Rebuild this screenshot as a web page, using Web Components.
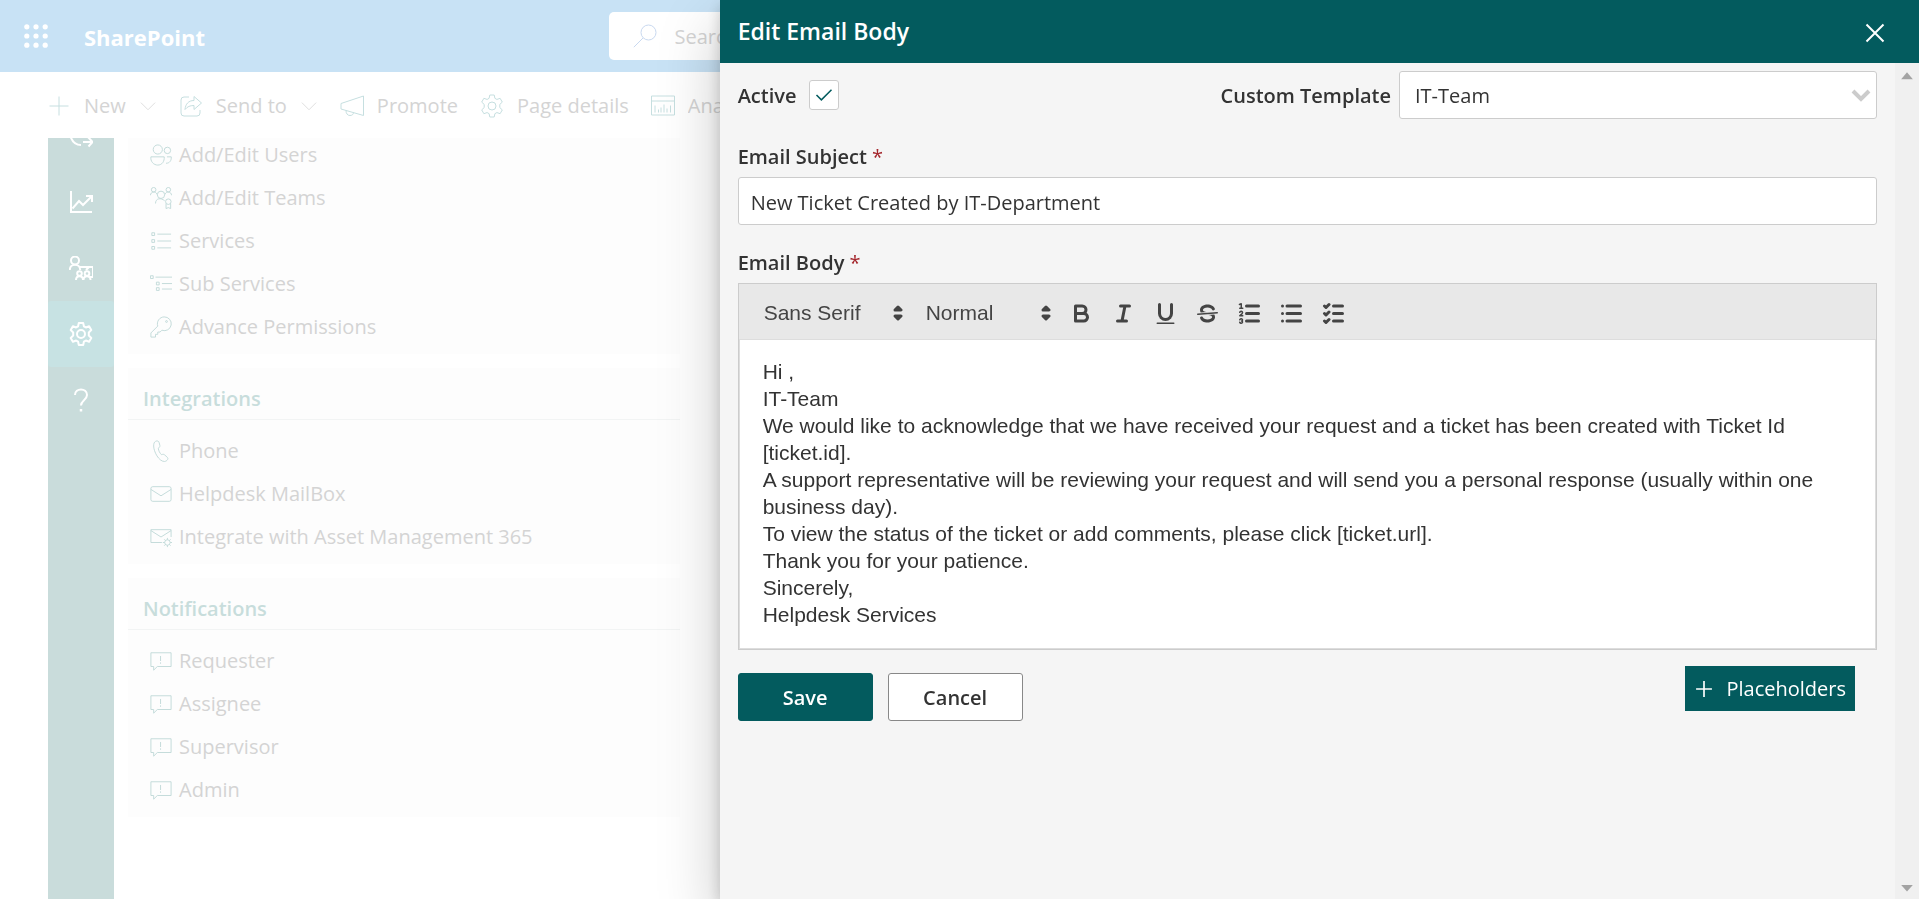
<!DOCTYPE html>
<html lang="en">
<head>
<meta charset="utf-8">
<title>Helpdesk 365 - Edit Email Body</title>
<style>
  html, body { margin: 0; height: 100%; overflow: hidden; background: #fff; }
  body { font-family: "Open Sans", "Noto Sans", sans-serif; font-size: 20px; line-height: 28px; color: #333; }
</style>
</head>
<body>
<sp-page>
  <sp-header slot="header" heading="SharePoint"></sp-header>
  <command-bar slot="commands">
    <command-item icon="plus" menu>New</command-item>
    <command-item icon="share" menu>Send to</command-item>
    <command-item icon="megaphone">Promote</command-item>
    <command-item icon="gear">Page details</command-item>
    <command-item icon="analytics">Analytics</command-item>
  </command-bar>
  <side-rail slot="rail">
    <rail-item icon="cycle" label="Automation"></rail-item>
    <rail-item icon="chart" label="Reports"></rail-item>
    <rail-item icon="people" label="Teams"></rail-item>
    <rail-item icon="gear" label="Settings" active></rail-item>
    <rail-item icon="help" label="Help"></rail-item>
  </side-rail>
  <settings-card>
    <settings-link icon="users">Add/Edit Users</settings-link>
    <settings-link icon="teams">Add/Edit Teams</settings-link>
    <settings-link icon="list">Services</settings-link>
    <settings-link icon="sublist">Sub Services</settings-link>
    <settings-link icon="key">Advance Permissions</settings-link>
  </settings-card>
  <settings-card heading="Integrations">
    <settings-link icon="phone">Phone</settings-link>
    <settings-link icon="mail">Helpdesk MailBox</settings-link>
    <settings-link icon="mailgear">Integrate with Asset Management 365</settings-link>
  </settings-card>
  <settings-card heading="Notifications">
    <settings-link icon="feedback">Requester</settings-link>
    <settings-link icon="feedback">Assignee</settings-link>
    <settings-link icon="feedback">Supervisor</settings-link>
    <settings-link icon="feedback">Admin</settings-link>
  </settings-card>
</sp-page>

<edit-panel heading="Edit Email Body">
  <template-row></template-row>
  <text-field label="Email Subject" value="New Ticket Created by IT-Department"></text-field>
  <rich-editor label="Email Body">
    <p>Hi ,</p>
    <p>IT-Team</p>
    <p>We would like to acknowledge that we have received your request and a ticket has been created with Ticket Id [ticket.id].</p>
    <p>A support representative will be reviewing your request and will send you a personal response (usually within one business day).</p>
    <p>To view the status of the ticket or add comments, please click [ticket.url].</p>
    <p>Thank you for your patience.</p>
    <p>Sincerely,</p>
    <p>Helpdesk Services</p>
  </rich-editor>
  <panel-actions></panel-actions>
</edit-panel>

<script>
const ICONS = {
  plus: '<path d="M12 2.5v19M2.5 12h19"/>',
  chevron: '<path d="M2.500 7.500l9.500 9.500 9.500-9.500"/>',
  share: '<path d="M10 3H5a3 3 0 0 0-3 3v13a3 3 0 0 0 3 3h13a3 3 0 0 0 3-3v-3"/><path d="M15 2.500l7.500 6.500-7.500 6.500v-4c-4 0-6.500 1-9 4 .5-5.500 3.500-9 9-9z"/>',
  megaphone: '<path d="M1 9.500L23.500 2v19.500L1 15z"/><path d="M6 16.500c0 3 1.500 5 4 5s3.500-1.500 3.500-3"/>',
  gear: '<circle cx="12" cy="12" r="4"/><path d="M9.800 1h4.400l.7 3.300 2 1.150 3.200-1.150 2.200 3.800-2.500 2.300v3.200l2.500 2.300-2.200 3.800-3.200-1.150-2 1.150-.7 3.300H9.800l-.7-3.300-2-1.150-3.200 1.150-2.200-3.800 2.500-2.300v-3.200L1.700 8.100l2.200-3.800 3.200 1.150 2-1.150z" stroke-linejoin="round"/>',
  analytics: '<path d="M.5 2h23v19H.5zM.5 7h23M4 18.500v-7M7.500 18.500v-3M10 18.500v-5M13 18.500v-8M16 18.500v-4M19.500 18.500v-7"/>',
  search: '<circle cx="15.500" cy="8.500" r="7.500"/><path d="M10 14L.8 23.200"/>',
  close: '<path d="M3.500 3.500l17 17M20.500 3.500l-17 17"/>',
  check: '<path d="M2 12l6.500 6.500L22 5"/>',
  cycle: '<path d="M1 11c2 7 6 10 11 10M5 10v3h3M14 18h9M19.500 13.500L23.500 18l-4 4.500M16 11l4 3V9"/>',
  chart: '<path d="M2 1v21h21M3.500 18.500L10 11l4 4 8.500-8.500M17 6h6v6"/>',
  people: '<circle cx="6" cy="4.500" r="4"/><path d="M.8 14c0-7 10.400-7 10.400 0M10 11h14v10h-3M17 14l3-3"/><circle cx="10.500" cy="17.500" r="2.300"/><circle cx="18" cy="17.500" r="2.300"/><path d="M7 24c0-5 7-5 7 0M14.500 24c0-5 7-5 7 0"/>',
  help: '<path d="M6 7c0-7.500 12-7.500 12 0 0 5-6 5.500-6 10.500"/><path d="M12 21v2.500" stroke-width="2.500"/>',
  users: '<circle cx="8.500" cy="6" r="5"/><circle cx="19" cy="7" r="3.500"/><path d="M1 14h14.500c.5 5-2.500 9-7 9S.2 19 1 14zM18.500 14h4.700c.3 4-1.700 7-5.700 7"/>',
  teams: '<circle cx="4" cy="3" r="2.500"/><circle cx="20" cy="3" r="2.500"/><circle cx="12" cy="8.500" r="4"/><circle cx="20" cy="16" r="3"/><path d="M.5 9c0-4 6-5 7-1M23.500 9c0-4-6-5-7-1M6 18c0-6 6-6.500 10-3M17.500 18v5.500l2.500-1 2.500 1V18"/>',
  list: '<path d="M2 3h3v3H2zM2 10.500h3v3H2zM2 18h3v3H2zM8 4.500h15M8 12h15M8 19.500h15"/>',
  sublist: '<path d="M.5 3h3v3h-3zM7 10h3v3H7zM7 16h3v3H7zM6 4.500h18M13 11.500h11M13 17.500h11"/>',
  key: '<path d="M15.500 1a7.500 7.500 0 1 1-2.500 14.500L11 17.500H8.500V20H6v3H1v-4.500L8.500 11A7.500 7.500 0 0 1 15.500 1z" stroke-linejoin="round"/><circle cx="18" cy="6" r="1"/>',
  phone: '<path d="M6 1.500c2-1 3.500-.5 4 1.500l.8 3c.3 1.500-.8 2.300-1.800 3 .5 3 1.500 5 3.500 7 1.200-.4 2.500-.8 3.500.3l3 2.700c1.500 1.500-.5 4-3 4.500-6.500 0-12-11-12-17C4 4 4.500 2.300 6 1.500z"/>',
  mail: '<rect x="1" y="4" width="22" height="16" rx="2"/><path d="M1 7l11 7 11-7"/>',
  mailgear: '<path d="M13 18H1V4h22v8M1 5l11 7 11-7"/><circle cx="19" cy="18" r="3"/><path d="M19 13v2M19 21v2M14 18h2M22 18h2M15.500 14.500l1.500 1.500M21 20l1.500 1.500M22.500 14.500L21 16M17 20l-1.500 1.500"/>',
  feedback: '<path d="M1 3h22v15H8l-4 4v-4H1zM11.500 6.500v5.500M11.500 13.500v1.500"/>',
  waffle: '<g fill="currentColor" stroke="none"><circle cx="2.800" cy="2.800" r="2.600"/><circle cx="12" cy="2.800" r="2.600"/><circle cx="21.200" cy="2.800" r="2.600"/><circle cx="2.800" cy="12" r="2.600"/><circle cx="12" cy="12" r="2.600"/><circle cx="21.200" cy="12" r="2.600"/><circle cx="2.800" cy="21.200" r="2.600"/><circle cx="12" cy="21.200" r="2.600"/><circle cx="21.200" cy="21.200" r="2.600"/></g>',
  selectarrow: '<path d="M4 8l8 8 8-8" stroke-width="4"/>',
  up: '<path d="M12 4l10 12H2z" fill="currentColor" stroke="none"/>',
  down: '<path d="M12 18L2 7h20z" fill="currentColor" stroke="none"/>'
};
const svg = (name, size = 24, weight = 1) =>
  `<svg width="${size}" height="${size}" viewBox="0 0 24 24" fill="none" stroke="currentColor" stroke-width="${weight}" aria-hidden="true">${ICONS[name]}</svg>`;

const TOOLS = {
  Bold: '<path d="M5,4H9.500A2.500,2.500,0,0,1,12,6.500v0A2.500,2.500,0,0,1,9.500,9H5V4Z"/><path d="M5,9h5.500A2.500,2.500,0,0,1,13,11.500v0A2.500,2.500,0,0,1,10.500,14H5V9Z"/>',
  Italic: '<path d="M7 4h6M5 14h6M8 14l2-10"/>',
  Underline: '<path d="M5,3V9a4,4,0,0,0,8,0V3"/><rect x="3" y="15" width="12" height="1" rx=".5" fill="currentColor" stroke="none"/>',
  Strikethrough: '<path d="M15.500 8.500l-13 1" stroke-width="1"/><path fill="currentColor" stroke="none" d="M9.007,8C6.542,7.791,6,7.519,6,6.500,6,5.792,7.283,5,9,5c1.571,0,2.765.679,2.969,1.309a1,1,0,0,0,1.900-.617C13.356,4.106,11.354,3,9,3,6.200,3,4,4.538,4,6.500a3.200,3.200,0,0,0,.5,1.843Z"/><path fill="currentColor" stroke="none" d="M8.984,10C11.457,10.208,12,10.479,12,11.500c0,.708-1.283,1.500-3,1.500-1.571,0-2.765-.679-2.969-1.309a1,1,0,1,0-1.900.617C4.644,13.894,6.646,15,9,15c2.800,0,5-1.538,5-3.500a3.200,3.200,0,0,0-.5-1.843Z"/>',
  'Numbered list': '<path d="M7 4h8M7 9h8M7 14h8"/><path stroke-width="1" d="M2.500 5.500h2M2.300 3l1.200-.5v3M4.500,10.500h-2c0-.234,1.850-1.076,1.850-2.234A.959,.959,0,0,0,2.500,8.156M2.500,14.846a.959,.959,0,0,0,1.850-.109A.7,.7,0,0,0,3.750,14a.688,.688,0,0,0,.6-.736,.959,.959,0,0,0-1.850-.109"/>',
  'Bulleted list': '<path d="M6 4h9M6 9h9M6 14h9M3 4h0M3 9h0M3 14h0"/>',
  Checklist: '<path d="M9 4h6M9 9h6M9 14h6M3 4l1 1 2-2M3 9l1 1 2-2M3 14l1 1 2-2"/>'
};
const tool = name => `<button type="button" aria-label="${name}"><svg width="27" height="27" viewBox="0 0 18 18" fill="none" stroke="currentColor" stroke-width="2" stroke-linecap="round" stroke-linejoin="round" aria-hidden="true">${TOOLS[name]}</svg></button>`;

const BASE = `*{box-sizing:border-box} svg{display:block;flex:none} button,input,select{font:inherit;color:inherit;margin:0} a{color:inherit;text-decoration:none}`;
function define(tag, render) {
  customElements.define(tag, class extends HTMLElement {
    connectedCallback() {
      if (this.shadowRoot) return;
      this.attachShadow({ mode: 'open' }).innerHTML = render(this).replace('<style>', '<style>' + BASE);
    }
  });
}

define('sp-page', () => `<style>
  :host{display:flex;flex-direction:column;height:100vh;color:#d4d4d4}
  .body{display:flex;flex:1;min-height:0;padding-left:48px;gap:14px;overflow:hidden}
  main{width:552px;display:flex;flex-direction:column;gap:14px;margin-top:-14px}
  </style>
  <slot name="header"></slot><slot name="commands"></slot>
  <div class="body"><slot name="rail"></slot><main><slot></slot></main></div>`);

define('sp-header', el => `<style>
  :host{display:block}
  header{display:grid;grid-template-columns:1fr 702px 1fr;align-items:center;height:72px;background:#c8e2f5;color:#fff}
  .brand{display:flex;align-items:center;gap:36px;padding-left:24px}
  .brand button{padding:0;border:0;background:none}
  a{font-size:22px;font-weight:700;padding-top:2px}
  label{display:flex;align-items:center;gap:18px;height:48px;padding-left:24px;background:#fff;border-radius:5px;color:#c9d9f0}
  input{flex:1;border:0;background:none;outline:0;padding:2px 0 0}
  input::placeholder{color:#d4d4d4}
  </style>
  <header><div class="brand"><button type="button" aria-label="App launcher">${svg('waffle')}</button><a href="#">${el.getAttribute('heading')}</a></div>
  <label>${svg('search')}<input type="search" aria-label="Search" placeholder="Search this site"></label></header>`);

define('command-bar', () => `<style>
  :host{display:block;width:37.5%;overflow:hidden}
  nav{display:flex;align-items:center;gap:22px;height:66px;padding:2px 0 0 47px}
  ::slotted(:last-child){flex:1 1 0;min-width:0}
  </style><nav aria-label="Page commands"><slot></slot></nav>`);

define('command-item', el => `<style>
  :host{display:block;overflow:hidden}
  button{display:flex;align-items:center;gap:13px;width:100%;padding:0;border:0;background:none;white-space:nowrap}
  .icon{color:#c6dfe0}
  .text{min-width:0;overflow:hidden}
  </style><button type="button"><span class="icon">${svg(el.getAttribute('icon'))}</span><span class="text"><slot></slot></span>${el.hasAttribute('menu') ? svg('chevron', 18) : ''}</button>`);

define('side-rail', () => `<style>
  :host{display:block;width:66px;flex:none;background:#c9dcdb}
  nav{display:flex;flex-direction:column;margin-top:-35px}
  </style><nav aria-label="Helpdesk"><slot></slot></nav>`);

define('rail-item', el => `<style>
  :host{display:block;color:#fff}
  :host([active]){background:#c7e2e3;border-radius:3px}
  a{display:grid;place-items:center;height:66px}
  </style><a href="#" aria-label="${el.getAttribute('label')}">${svg(el.getAttribute('icon'), 24, 2)}</a>`);

define('settings-card', el => `<style>
  :host{display:block;background:#fdfdfd}
  h2{margin:0;height:52px;padding:17px 15px 0;font-size:20px;line-height:28px;font-weight:600;color:#c8dddc;border-bottom:1px solid #f2f4f4}
  .links{padding:9px 22px 6px}
  </style>${el.hasAttribute('heading') ? `<h2>${el.getAttribute('heading')}</h2>` : ''}<div class="links"><slot></slot></div>`);

define('settings-link', el => `<style>
  :host{display:block}
  a{display:flex;align-items:center;gap:7px;height:43px}
  .icon{color:#c0d9d8}
  </style><a href="#"><span class="icon">${svg(el.getAttribute('icon'), 22, 1)}</span><slot></slot></a>`);

define('edit-panel', el => `<style>
  :host{position:fixed;top:0;right:0;bottom:0;width:62.5%;display:flex;flex-direction:column;background:#f5f5f5;
    box-shadow:0 26px 58px rgba(0,0,0,.22),0 5px 14px rgba(0,0,0,.18)}
  header{display:flex;align-items:center;justify-content:space-between;height:63px;padding:0 32px 0 18px;background:#035b5e;color:#fff;flex:none}
  h1{margin:0;padding-bottom:2px;font-size:23px;line-height:32px;font-weight:600}
  header button{padding:2px 0 0;border:0;background:none}
  .body{display:flex;flex:1;min-height:0}
  form{flex:1;min-width:0;padding:8px 18px}
  .bar{display:flex;flex-direction:column;justify-content:space-between;align-items:center;width:24px;padding:7px 0 4px;background:#f0f0f0;color:#a3a3a3}
  </style>
  <header><h1>${el.getAttribute('heading')}</h1><button type="button" aria-label="Close">${svg('close', 24, 2)}</button></header>
  <div class="body"><form onsubmit="return false"><slot></slot></form>
  <div class="bar" aria-hidden="true">${svg('up', 14)}${svg('down', 14)}</div></div>`);

define('template-row', () => `<style>
  :host{display:flex;justify-content:space-between;align-items:center;height:48px}
  .group{display:flex;align-items:center;gap:13px}
  .wide{gap:8px}
  label{font-weight:600;padding-top:2px}
  .tick,.pick{display:grid;align-items:center}
  .tick>*,.pick>*{grid-area:1/1}
  input{appearance:none;width:30px;height:30px;background:#fff;border:1px solid #ccc;border-radius:3px}
  .tick svg{justify-self:center;color:#035b5e;pointer-events:none;visibility:hidden}
  input:checked+svg{visibility:visible}
  select{appearance:none;width:478px;height:48px;padding:2px 15px 0;background:#fff;border:1px solid #ccc;border-radius:3px}
  .pick svg{justify-self:end;margin-right:4px;color:#ccc;pointer-events:none}
  </style>
  <div class="group"><label for="active">Active</label><span class="tick"><input id="active" type="checkbox" checked>${svg('check', 18, 2)}</span></div>
  <div class="group wide"><label for="template">Custom Template</label><span class="pick"><select id="template"><option>IT-Team</option></select>${svg('selectarrow', 24)}</span></div>`);

const FIELD = `:host{display:block}
  label{display:block;font-weight:600;line-height:28px;margin-bottom:6px}
  label span{color:#a4262c;font-weight:400}`;

define('text-field', el => `<style>${FIELD}
  :host{margin-top:24px}
  input{width:100%;height:48px;padding:2px 12px 0;background:#fff;border:1px solid #ccc;border-radius:3px}
  </style><label for="field">${el.getAttribute('label')} <span>*</span></label><input id="field" type="text" required value="${el.getAttribute('value')}">`);

define('rich-editor', el => `<style>${FIELD}
  :host{margin-top:24px}
  .editor{border:1px solid #ccc}
  .tools{display:flex;align-items:center;height:56px;padding:3px 25px 0;background:#e8e8e8;color:#444;border-bottom:1px solid #ddd;font:21px/28px "Liberation Sans",sans-serif}
  .pick{display:grid;align-items:center;width:146px;margin-right:16px}
  .pick.small{width:132px;margin-right:3px}
  .pick>*{grid-area:1/1}
  select{appearance:none;width:100%;padding:0;border:0;background:none}
  .pick svg{justify-self:end;pointer-events:none}
  button{display:grid;place-items:center;width:42px;height:36px;padding:0;border:0;background:none}
  .text{min-height:309px;padding:18px 23px;background:#fff;border:1px solid #ddd;border-top:0;font:21px/27px "Liberation Sans",sans-serif;outline:0}
  ::slotted(p){margin:0}
  </style>
  <label id="cap">${el.getAttribute('label')} <span>*</span></label>
  <div class="editor">
    <div class="tools" role="toolbar" aria-label="Formatting">
      <span class="pick"><select aria-label="Font"><option>Sans Serif</option></select>${arrows()}</span>
      <span class="pick small"><select aria-label="Size"><option>Normal</option></select>${arrows()}</span>
      ${Object.keys(TOOLS).map(tool).join('')}
    </div>
    <div class="text" role="textbox" aria-multiline="true" aria-labelledby="cap" contenteditable="true" spellcheck="false"><slot></slot></div>
  </div>`);
function arrows() {
  return '<svg width="24" height="24" viewBox="1 1 16 16" fill="currentColor" stroke="currentColor" stroke-width="2" stroke-linejoin="round" aria-hidden="true"><path d="M7 11l2 2 2-2zM7 7l2-2 2 2z"/></svg>';
}

define('panel-actions', () => `<style>
  :host{display:flex;justify-content:space-between;align-items:flex-start;padding:16px 22px 0 0}
  .pair{display:flex;gap:15px;padding-top:7px}
  button{font-weight:600}
  .pair button{width:135px;height:48px;padding:2px 0 0;background:#fff;border:1px solid #888;border-radius:3px}
  .pair button.save{background:#035b5e;border-color:#035b5e;color:#fff}
  .add{display:flex;align-items:center;gap:12px;height:45px;padding:0 9px;border:0;background:#035b5e;color:#fff;font-weight:400}
  </style>
  <div class="pair"><button type="submit" class="save">Save</button><button type="button">Cancel</button></div>
  <button type="button" class="add">${svg('plus', 20, 2)}Placeholders</button>`);
</script>
</body>
</html>
